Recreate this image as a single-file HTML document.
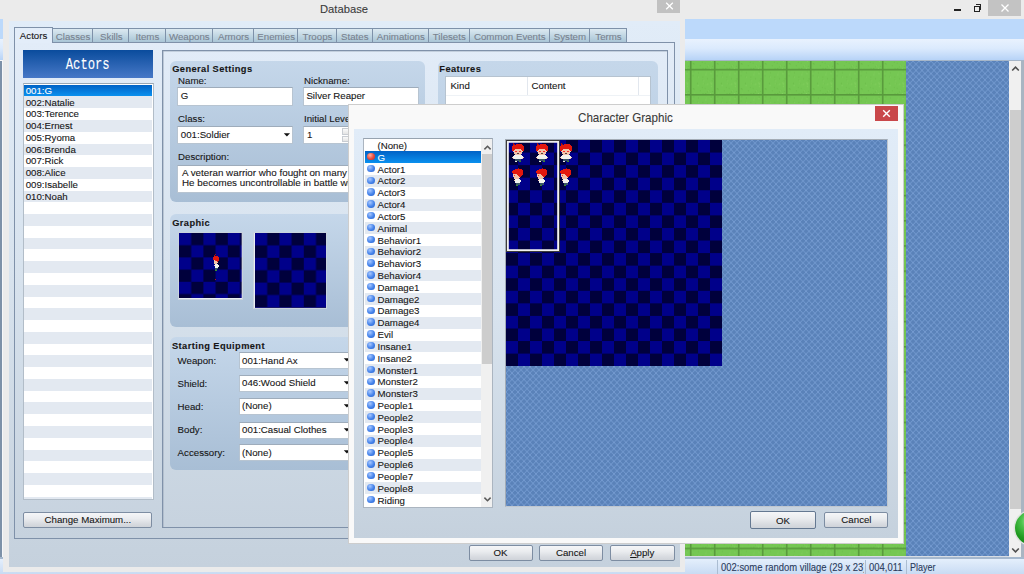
<!DOCTYPE html><html><head><meta charset="utf-8"><style>
*{margin:0;padding:0;box-sizing:border-box}
html,body{width:1024px;height:574px;overflow:hidden;background:#ebebeb;font-family:"Liberation Sans",sans-serif;font-size:9.7px;color:#161616;-webkit-text-stroke:0.1px currentColor}
.a{position:absolute}
.t{position:absolute;white-space:nowrap;line-height:12px;height:12px}
.grp{position:absolute;border-radius:6px;background:linear-gradient(#c5d7ea,#a8bed5)}
.inp{position:absolute;background:#fff;border:1px solid #b7c4d1;border-top-color:#9eacbb}
.btn{position:absolute;border:1px solid #7d8da2;border-radius:2px;background:linear-gradient(#f5f6f8 0%,#eaecef 40%,#d9dce1 75%,#cfd3d9 100%)}
.tab{position:absolute;top:28px;height:14px;border:1px solid #7e91a9;border-bottom:none;border-left:none;background:linear-gradient(#dce9f1,#bfd5e2 55%,#a9c5d6)}
.row{position:absolute;white-space:nowrap}
</style></head><body>
<div class="a" style="left:0;top:0;width:1024px;height:18.5px;background:#ebebeb"></div>
<div class="a" style="left:0;top:18.5px;width:1024px;height:20px;background:#bcd9fb"></div>
<div class="a" style="left:0;top:38.5px;width:1024px;height:21.5px;background:linear-gradient(#e9f2fe,#dbeafd 45%,#b7d3f7)"></div>
<div class="a" style="left:0;top:60px;width:1024px;height:1.3px;background:#a6b6c8"></div>
<div class="a" style="left:954px;top:9.2px;width:7px;height:1.6px;background:#222"></div>
<div class="a" style="left:973.5px;top:6px;width:6px;height:5.5px;border:1px solid #222;border-top-width:1.6px"></div>
<div class="a" style="left:975.5px;top:4px;width:5.5px;height:5.5px;border-top:1px solid #222;border-right:1px solid #222"></div>
<div class="a" style="left:987.5px;top:0;width:33.5px;height:15.6px;background:#c3c3c3"></div>
<svg class="a" style="left:999.5px;top:3px" width="10" height="10"><path d="M1.5 1.5L8.5 8.5M8.5 1.5L1.5 8.5" stroke="#fff" stroke-width="1.3"/></svg>
<div class="a" style="left:0;top:60px;width:3.3px;height:497px;background:#f6f7f9"></div>
<div class="a" style="left:0;top:61px;width:1.8px;height:495.8px;background:#7d91a8"></div>
<svg class="a" style="left:685px;top:61.3px" width="339" height="496"><defs><pattern id="gp" x="4.9" y="7.8" width="24" height="25.2" patternUnits="userSpaceOnUse"><rect width="24" height="25.2" fill="#75c753"/><rect x="7.0" y="14.2" width="1" height="1" fill="#67b845"/><rect x="21.2" y="12.7" width="1" height="1" fill="#7ccb57"/><rect x="3.4" y="2.3" width="1" height="1" fill="#6cbd49"/><rect x="7.4" y="7.3" width="1" height="1" fill="#6cbd49"/><rect x="13.4" y="14.4" width="1" height="1" fill="#6cbd49"/><rect x="15.4" y="5.4" width="1" height="1" fill="#86d161"/><rect x="20.2" y="13.8" width="1" height="1" fill="#82cf5c"/><rect x="16.1" y="3.4" width="1" height="1" fill="#7ccb57"/><rect x="2.9" y="19.6" width="1" height="1" fill="#67b845"/><rect x="11.9" y="18.2" width="1" height="1" fill="#6cbd49"/><rect x="17.0" y="22.7" width="1" height="1" fill="#6cbd49"/><rect x="17.3" y="15.0" width="1" height="1" fill="#86d161"/><rect x="20.5" y="4.2" width="1" height="1" fill="#86d161"/><rect x="12.4" y="7.8" width="1" height="1" fill="#6cbd49"/><rect x="18.4" y="21.2" width="1" height="1" fill="#6cbd49"/><rect x="12.7" y="10.7" width="1" height="1" fill="#67b845"/><rect x="13.2" y="11.2" width="1" height="1" fill="#86d161"/><rect x="21.0" y="17.3" width="1" height="1" fill="#82cf5c"/><rect x="20.0" y="24.3" width="1" height="1" fill="#86d161"/><rect x="16.7" y="9.3" width="1" height="1" fill="#7ccb57"/><rect x="21.0" y="14.8" width="1" height="1" fill="#86d161"/><rect x="15.3" y="24.2" width="1" height="1" fill="#67b845"/><rect x="8.0" y="3.4" width="1" height="1" fill="#6cbd49"/><rect x="3.9" y="20.0" width="1" height="1" fill="#6cbd49"/><rect x="20.8" y="2.5" width="1" height="1" fill="#6cbd49"/><rect x="18.1" y="21.6" width="1" height="1" fill="#82cf5c"/><rect x="14.7" y="19.1" width="1" height="1" fill="#6cbd49"/><rect x="17.1" y="9.4" width="1" height="1" fill="#67b845"/><rect x="12.6" y="24.5" width="1" height="1" fill="#67b845"/><rect x="2.2" y="4.4" width="1" height="1" fill="#7ccb57"/><rect x="2.7" y="6.4" width="1" height="1" fill="#6cbd49"/><rect x="8.1" y="7.9" width="1" height="1" fill="#82cf5c"/><rect x="22.6" y="9.6" width="1" height="1" fill="#67b845"/><rect x="22.1" y="22.2" width="1" height="1" fill="#6cbd49"/><rect x="9.9" y="21.6" width="1" height="1" fill="#6cbd49"/><rect x="15.5" y="15.4" width="1" height="1" fill="#7ccb57"/><rect x="4.2" y="23.9" width="1" height="1" fill="#7ccb57"/><rect x="7.7" y="16.3" width="1" height="1" fill="#86d161"/><rect x="21.7" y="11.8" width="1" height="1" fill="#67b845"/><rect x="12.9" y="14.3" width="1" height="1" fill="#82cf5c"/><rect x="0" y="0" width="24" height="1.6" fill="#58993c"/><rect x="0" y="0" width="1.6" height="25.2" fill="#58993c"/></pattern><pattern id="wp" x="0" y="0" width="6" height="6.3" patternUnits="userSpaceOnUse"><rect width="6" height="6.3" fill="#5a82b9"/><path d="M0 0L6 6.3M6 0L0 6.3" stroke="#7aa0d5" stroke-width="0.8"/></pattern></defs><rect x="0" y="0" width="221" height="496" fill="url(#gp)"/><rect x="221" y="0" width="103" height="496" fill="url(#wp)"/></svg>
<div class="a" style="left:685px;top:556.3px;width:324px;height:1px;background:#d8dde4"></div>
<div class="a" style="left:1009px;top:61.3px;width:12px;height:495.5px;background:#f0f0f0"></div>
<div class="a" style="left:1021px;top:61.3px;width:3px;height:495.5px;background:#a9b5c2"></div>
<div class="a" style="left:1010px;top:110px;width:11px;height:398.5px;background:#cdcdcd"></div>
<svg class="a" style="left:1010px;top:64px" width="11" height="9"><path d="M2.2 6.5L5.5 3.2L8.8 6.5" stroke="#505050" stroke-width="1.6" fill="none"/></svg>
<svg class="a" style="left:1010px;top:546px" width="11" height="9"><path d="M2.2 2.5L5.5 5.8L8.8 2.5" stroke="#505050" stroke-width="1.6" fill="none"/></svg>
<div class="a" style="left:1014.5px;top:511px;width:34px;height:34px;border-radius:50%;background:radial-gradient(circle at 45% 30%,#b6f0b0 0,#4cc24c 30%,#1f9a1f 60%,#107010);box-shadow:0 0 0 1.5px #dfe4df"></div>
<div class="a" style="left:0;top:557px;width:1024px;height:17px;background:linear-gradient(#a5b8ce 0,#a5b8ce 2px,#e4effc 2px,#d5e4f7 60%,#c8dbf3)"></div>
<div class="a" style="left:717.2px;top:559.5px;width:1.2px;height:14.5px;background:#abbdd2"></div>
<div class="a" style="left:865.0px;top:559.5px;width:1.2px;height:14.5px;background:#abbdd2"></div>
<div class="a" style="left:906.0px;top:559.5px;width:1.2px;height:14.5px;background:#abbdd2"></div>
<div class="a" style="left:718.4px;top:559px;width:145.8px;height:15px;overflow:hidden">
<div class="t" style="left:2.50px;top:2.33px;font-size:10.50px;color:#2a3b5c;transform:scaleX(0.9);transform-origin:0 0">002:some random village (29 x 23)</div>
</div>
<div class="t" style="left:869.00px;top:561.33px;font-size:10.50px;color:#2a3b5c;transform:scaleX(0.9);transform-origin:0 0">004,011</div>
<div class="t" style="left:910.00px;top:561.33px;font-size:10.50px;color:#2a3b5c;transform:scaleX(0.86);transform-origin:0 0">Player</div>
<div class="a" style="left:3.3px;top:0;width:681.8px;height:572.3px;background:#ebebeb"></div>
<div class="t" style="left:319.50px;top:3.40px;font-size:11.80px;color:#3a3a3a;transform:scaleX(0.95);transform-origin:0 0">Database</div>
<div class="a" style="left:657.3px;top:0;width:22.8px;height:12.8px;background:#c1c1c1"></div>
<svg class="a" style="left:665px;top:2.2px" width="9" height="8"><path d="M1.2 0.8L7.8 7.2M7.8 0.8L1.2 7.2" stroke="#fff" stroke-width="1.3"/></svg>
<div class="a" style="left:8.8px;top:20.5px;width:671px;height:546.2px;background:linear-gradient(#e1ecf8 0%,#d8e3ee 45%,#c5d1dd 100%)"></div>
<div class="a" style="left:14px;top:42px;width:661px;height:497px;border:1px solid #7f91a9;background:linear-gradient(#e2ecf8 0%,#d8e3ee 45%,#c6d2de 100%)"></div>
<div class="tab" style="left:53px;width:40px"></div>
<div class="t" style="left:52.70px;width:40.70px;text-align:center;top:30.89px;font-size:9.70px;color:#78828f">Classes</div>
<div class="tab" style="left:93px;width:36px"></div>
<div class="t" style="left:93.40px;width:36.00px;text-align:center;top:30.89px;font-size:9.70px;color:#78828f">Skills</div>
<div class="tab" style="left:129px;width:37px"></div>
<div class="t" style="left:129.40px;width:36.10px;text-align:center;top:30.89px;font-size:9.70px;color:#78828f">Items</div>
<div class="tab" style="left:166px;width:47px"></div>
<div class="t" style="left:165.50px;width:47.70px;text-align:center;top:30.89px;font-size:9.70px;color:#78828f">Weapons</div>
<div class="tab" style="left:213px;width:41px"></div>
<div class="t" style="left:213.20px;width:40.70px;text-align:center;top:30.89px;font-size:9.70px;color:#78828f">Armors</div>
<div class="tab" style="left:254px;width:44px"></div>
<div class="t" style="left:253.90px;width:44.50px;text-align:center;top:30.89px;font-size:9.70px;color:#78828f">Enemies</div>
<div class="tab" style="left:298px;width:39px"></div>
<div class="t" style="left:298.40px;width:38.20px;text-align:center;top:30.89px;font-size:9.70px;color:#78828f">Troops</div>
<div class="tab" style="left:337px;width:36px"></div>
<div class="t" style="left:336.60px;width:36.40px;text-align:center;top:30.89px;font-size:9.70px;color:#78828f">States</div>
<div class="tab" style="left:373px;width:56px"></div>
<div class="t" style="left:373.00px;width:55.60px;text-align:center;top:30.89px;font-size:9.70px;color:#78828f">Animations</div>
<div class="tab" style="left:429px;width:41px"></div>
<div class="t" style="left:428.60px;width:41.40px;text-align:center;top:30.89px;font-size:9.70px;color:#78828f">Tilesets</div>
<div class="tab" style="left:470px;width:80px"></div>
<div class="t" style="left:470.00px;width:79.50px;text-align:center;top:30.89px;font-size:9.70px;color:#78828f">Common Events</div>
<div class="tab" style="left:550px;width:40px"></div>
<div class="t" style="left:549.50px;width:40.90px;text-align:center;top:30.89px;font-size:9.70px;color:#78828f">System</div>
<div class="tab" style="left:590px;width:37px"></div>
<div class="t" style="left:590.40px;width:36.30px;text-align:center;top:30.89px;font-size:9.70px;color:#78828f">Terms</div>
<div class="a" style="left:14px;top:27px;width:39px;height:16px;border:1px solid #7f91a9;border-bottom:none;background:#e3edf9"></div>
<div class="t" style="left:14.50px;width:38.20px;text-align:center;top:30.29px;font-size:9.70px;">Actors</div>
<div class="a" style="left:22.5px;top:49.7px;width:130.6px;height:28.3px;background:linear-gradient(#0a4c9d,#4778c7)"></div>
<div class="a" style="left:22.5px;top:55.5px;width:131px;height:18px;text-align:center;color:#fff;font-family:'Liberation Mono',monospace;font-size:16.5px;line-height:18px"><span style="display:inline-block;transform:scaleX(0.74)">Actors</span></div>
<div class="a" style="left:22.5px;top:82.6px;width:131px;height:417px;border:1px solid #b2bdc8;border-top-color:#9aa7b4;background:#fff;overflow:hidden">
<div class="row" style="left:0.6px;top:1.10px;width:128.4px;height:11.77px;background:linear-gradient(#0062c6,#0a90ee)"></div>
<div class="t" style="left:2.20px;top:1.19px;font-size:9.70px;color:#fff">001:G</div>
<div class="row" style="left:0.6px;top:12.87px;width:128.4px;height:11.77px;background:#e3e9f1"></div>
<div class="t" style="left:2.20px;top:12.96px;font-size:9.70px;">002:Natalie</div>
<div class="row" style="left:0.6px;top:24.64px;width:128.4px;height:11.77px;background:#fff"></div>
<div class="t" style="left:2.20px;top:24.73px;font-size:9.70px;">003:Terence</div>
<div class="row" style="left:0.6px;top:36.41px;width:128.4px;height:11.77px;background:#e3e9f1"></div>
<div class="t" style="left:2.20px;top:36.50px;font-size:9.70px;">004:Ernest</div>
<div class="row" style="left:0.6px;top:48.18px;width:128.4px;height:11.77px;background:#fff"></div>
<div class="t" style="left:2.20px;top:48.27px;font-size:9.70px;">005:Ryoma</div>
<div class="row" style="left:0.6px;top:59.95px;width:128.4px;height:11.77px;background:#e3e9f1"></div>
<div class="t" style="left:2.20px;top:60.04px;font-size:9.70px;">006:Brenda</div>
<div class="row" style="left:0.6px;top:71.72px;width:128.4px;height:11.77px;background:#fff"></div>
<div class="t" style="left:2.20px;top:71.81px;font-size:9.70px;">007:Rick</div>
<div class="row" style="left:0.6px;top:83.49px;width:128.4px;height:11.77px;background:#e3e9f1"></div>
<div class="t" style="left:2.20px;top:83.58px;font-size:9.70px;">008:Alice</div>
<div class="row" style="left:0.6px;top:95.26px;width:128.4px;height:11.77px;background:#fff"></div>
<div class="t" style="left:2.20px;top:95.35px;font-size:9.70px;">009:Isabelle</div>
<div class="row" style="left:0.6px;top:107.03px;width:128.4px;height:11.77px;background:#e3e9f1"></div>
<div class="t" style="left:2.20px;top:107.12px;font-size:9.70px;">010:Noah</div>
<div class="row" style="left:0.6px;top:118.80px;width:128.4px;height:11.77px;background:#fff"></div>
<div class="row" style="left:0.6px;top:130.57px;width:128.4px;height:11.77px;background:#e3e9f1"></div>
<div class="row" style="left:0.6px;top:142.34px;width:128.4px;height:11.77px;background:#fff"></div>
<div class="row" style="left:0.6px;top:154.11px;width:128.4px;height:11.77px;background:#e3e9f1"></div>
<div class="row" style="left:0.6px;top:165.88px;width:128.4px;height:11.77px;background:#fff"></div>
<div class="row" style="left:0.6px;top:177.65px;width:128.4px;height:11.77px;background:#e3e9f1"></div>
<div class="row" style="left:0.6px;top:189.42px;width:128.4px;height:11.77px;background:#fff"></div>
<div class="row" style="left:0.6px;top:201.19px;width:128.4px;height:11.77px;background:#e3e9f1"></div>
<div class="row" style="left:0.6px;top:212.96px;width:128.4px;height:11.77px;background:#fff"></div>
<div class="row" style="left:0.6px;top:224.73px;width:128.4px;height:11.77px;background:#e3e9f1"></div>
<div class="row" style="left:0.6px;top:236.50px;width:128.4px;height:11.77px;background:#fff"></div>
<div class="row" style="left:0.6px;top:248.27px;width:128.4px;height:11.77px;background:#e3e9f1"></div>
<div class="row" style="left:0.6px;top:260.04px;width:128.4px;height:11.77px;background:#fff"></div>
<div class="row" style="left:0.6px;top:271.81px;width:128.4px;height:11.77px;background:#e3e9f1"></div>
<div class="row" style="left:0.6px;top:283.58px;width:128.4px;height:11.77px;background:#fff"></div>
<div class="row" style="left:0.6px;top:295.35px;width:128.4px;height:11.77px;background:#e3e9f1"></div>
<div class="row" style="left:0.6px;top:307.12px;width:128.4px;height:11.77px;background:#fff"></div>
<div class="row" style="left:0.6px;top:318.89px;width:128.4px;height:11.77px;background:#e3e9f1"></div>
<div class="row" style="left:0.6px;top:330.66px;width:128.4px;height:11.77px;background:#fff"></div>
<div class="row" style="left:0.6px;top:342.43px;width:128.4px;height:11.77px;background:#e3e9f1"></div>
<div class="row" style="left:0.6px;top:354.20px;width:128.4px;height:11.77px;background:#fff"></div>
<div class="row" style="left:0.6px;top:365.97px;width:128.4px;height:11.77px;background:#e3e9f1"></div>
<div class="row" style="left:0.6px;top:377.74px;width:128.4px;height:11.77px;background:#fff"></div>
<div class="row" style="left:0.6px;top:389.51px;width:128.4px;height:11.77px;background:#e3e9f1"></div>
<div class="row" style="left:0.6px;top:401.28px;width:128.4px;height:11.77px;background:#fff"></div>
<div class="row" style="left:0.6px;top:413.05px;width:128.4px;height:11.77px;background:#e3e9f1"></div>
</div>
<div class="btn" style="left:23.4px;top:511.6px;width:129px;height:16px"></div>
<div class="t" style="left:23.40px;width:129.00px;text-align:center;top:514.19px;font-size:9.70px;">Change Maximum...</div>
<div class="a" style="left:162px;top:50px;width:506px;height:478px;border:1px solid #7f91a9;box-shadow:inset 0.6px 0.6px 0 #a4b1c1"></div>
<div class="grp" style="left:170.2px;top:61px;width:254.5px;height:141px"></div>
<div class="t" style="left:172.20px;top:63.43px;font-size:9.30px;font-weight:bold;letter-spacing:0.4px">General Settings</div>
<div class="t" style="left:178.00px;top:74.79px;font-size:9.70px;">Name:</div>
<div class="t" style="left:304.00px;top:74.79px;font-size:9.70px;">Nickname:</div>
<div class="inp" style="left:177px;top:87px;width:116px;height:19px"></div>
<div class="t" style="left:180.80px;top:89.99px;font-size:9.70px;">G</div>
<div class="inp" style="left:303px;top:87px;width:116px;height:19px"></div>
<div class="t" style="left:306.40px;top:89.99px;font-size:9.70px;">Silver Reaper</div>
<div class="t" style="left:178.00px;top:112.79px;font-size:9.70px;">Class:</div>
<div class="t" style="left:304.00px;top:112.79px;font-size:9.70px;">Initial Level:</div>
<div class="inp" style="left:177px;top:126px;width:116px;height:18px"></div>
<div class="t" style="left:180.80px;top:128.59px;font-size:9.70px;">001:Soldier</div>
<svg class="a" style="left:282.5px;top:131.5px" width="8" height="6"><path d="M0.8 1.2h6.2l-3.1 3.4z" fill="#111"/></svg>
<div class="inp" style="left:303px;top:126px;width:60px;height:18px"></div>
<div class="t" style="left:307.00px;top:128.59px;font-size:9.70px;">1</div>
<div class="a" style="left:342.4px;top:128px;width:8px;height:6.5px;background:linear-gradient(#fafafa,#e4e4e4);border:1px solid #c8ccd2"></div>
<div class="a" style="left:342.4px;top:135.5px;width:8px;height:6.5px;background:linear-gradient(#fafafa,#e4e4e4);border:1px solid #c8ccd2"></div>
<div class="t" style="left:178.00px;top:151.29px;font-size:9.70px;">Description:</div>
<div class="inp" style="left:177px;top:165px;width:240px;height:28px"></div>
<div class="t" style="left:182.00px;top:166.86px;font-size:9.80px;">A veteran warrior who fought on many battlefields.</div>
<div class="t" style="left:182.00px;top:177.06px;font-size:9.80px;">He becomes uncontrollable in battle when angered.</div>
<div class="grp" style="left:437.7px;top:60.6px;width:220.3px;height:300px"></div>
<div class="t" style="left:439.30px;top:63.43px;font-size:9.30px;font-weight:bold;letter-spacing:0.4px">Features</div>
<div class="a" style="left:445.3px;top:75.8px;width:205.7px;height:200px;background:#fff;border:1px solid #b6c3d0"></div>
<div class="a" style="left:446.3px;top:94.5px;width:204px;height:1px;background:#eef2f6"></div>
<div class="a" style="left:526.5px;top:77px;width:1px;height:17.5px;background:#e2e7ee"></div>
<div class="a" style="left:637.7px;top:77px;width:1px;height:17.5px;background:#e2e7ee"></div>
<div class="t" style="left:450.40px;top:80.09px;font-size:9.70px;">Kind</div>
<div class="t" style="left:531.60px;top:80.09px;font-size:9.70px;">Content</div>
<div class="grp" style="left:169.8px;top:214.4px;width:255px;height:112.7px"></div>
<div class="t" style="left:172.20px;top:217.13px;font-size:9.30px;font-weight:bold;letter-spacing:0.4px">Graphic</div>
<div class="a" style="left:177.8px;top:231.5px;width:65.2px;height:68.3px;border:1px solid #c9d3dd;background:#e9eef3"></div>
<svg class="a" style="left:179.00px;top:232.70px" width="62.70" height="65.60"><defs><pattern id="ck1" width="24.40" height="24.40" patternUnits="userSpaceOnUse"><rect width="24.40" height="24.40" fill="#00003c"/><rect width="12.20" height="12.20" fill="#00008a"/><rect x="12.20" y="12.20" width="12.20" height="12.20" fill="#00008a"/></pattern></defs><rect width="62.70" height="65.60" fill="url(#ck1)"/></svg>
<div class="a" style="left:253.4px;top:231.5px;width:73.9px;height:77.3px;border:1px solid #c9d3dd;background:#e9eef3"></div>
<svg class="a" style="left:254.60px;top:232.70px" width="71.50" height="74.90"><defs><pattern id="ck2" width="24.40" height="24.80" patternUnits="userSpaceOnUse"><rect width="24.40" height="24.80" fill="#00003c"/><rect width="12.20" height="12.40" fill="#00008a"/><rect x="12.20" y="12.40" width="12.20" height="12.40" fill="#00008a"/></pattern></defs><rect width="71.50" height="74.90" fill="url(#ck2)"/></svg>
<div class="grp" style="left:169.8px;top:336.8px;width:255px;height:133.1px"></div>
<div class="t" style="left:172.00px;top:339.83px;font-size:9.30px;font-weight:bold;letter-spacing:0.4px">Starting Equipment</div>
<div class="t" style="left:177.60px;top:354.89px;font-size:9.70px;">Weapon:</div>
<div class="inp" style="left:239px;top:352px;width:115px;height:17px"></div>
<div class="t" style="left:242.00px;top:354.59px;font-size:9.70px;">001:Hand Ax</div>
<svg class="a" style="left:343px;top:357.4px" width="8" height="6"><path d="M0.8 1.2h6.2l-3.1 3.4z" fill="#111"/></svg>
<div class="t" style="left:177.60px;top:377.59px;font-size:9.70px;">Shield:</div>
<div class="inp" style="left:239px;top:375px;width:115px;height:17px"></div>
<div class="t" style="left:242.00px;top:377.29px;font-size:9.70px;">046:Wood Shield</div>
<svg class="a" style="left:343px;top:380.1px" width="8" height="6"><path d="M0.8 1.2h6.2l-3.1 3.4z" fill="#111"/></svg>
<div class="t" style="left:177.60px;top:400.79px;font-size:9.70px;">Head:</div>
<div class="inp" style="left:239px;top:398px;width:115px;height:17px"></div>
<div class="t" style="left:242.00px;top:400.49px;font-size:9.70px;">(None)</div>
<svg class="a" style="left:343px;top:403.3px" width="8" height="6"><path d="M0.8 1.2h6.2l-3.1 3.4z" fill="#111"/></svg>
<div class="t" style="left:177.60px;top:424.09px;font-size:9.70px;">Body:</div>
<div class="inp" style="left:239px;top:422px;width:115px;height:17px"></div>
<div class="t" style="left:242.00px;top:423.79px;font-size:9.70px;">001:Casual Clothes</div>
<svg class="a" style="left:343px;top:426.5px" width="8" height="6"><path d="M0.8 1.2h6.2l-3.1 3.4z" fill="#111"/></svg>
<div class="t" style="left:177.60px;top:447.09px;font-size:9.70px;">Accessory:</div>
<div class="inp" style="left:239px;top:444px;width:115px;height:17px"></div>
<div class="t" style="left:242.00px;top:446.79px;font-size:9.70px;">(None)</div>
<svg class="a" style="left:343px;top:449.1px" width="8" height="6"><path d="M0.8 1.2h6.2l-3.1 3.4z" fill="#111"/></svg>
<div class="btn" style="left:468.5px;top:544.6px;width:64.0px;height:16.2px"></div>
<div class="t" style="left:468.50px;width:64.00px;text-align:center;top:547.29px;font-size:9.70px;">OK</div>
<div class="btn" style="left:539.0px;top:544.6px;width:64.0px;height:16.2px"></div>
<div class="t" style="left:539.00px;width:64.00px;text-align:center;top:547.29px;font-size:9.70px;">Cancel</div>
<div class="btn" style="left:610.0px;top:544.6px;width:64.5px;height:16.2px"></div>
<div class="t" style="left:610.00px;width:64.50px;text-align:center;top:547.29px;font-size:9.70px;"><u>A</u>pply</div>
<div class="a" style="left:348.5px;top:105px;width:554.5px;height:438.4px;background:#f9f9f9;box-shadow:0 0 0 1px #cdcdcd"></div>
<div class="t" style="left:577.80px;top:111.54px;font-size:12.90px;color:#3a3a3a;transform:scaleX(0.9);transform-origin:0 0">Character Graphic</div>
<div class="a" style="left:875px;top:105.5px;width:23px;height:15.6px;background:#c9474a"></div>
<svg class="a" style="left:882px;top:109px" width="9" height="9"><path d="M1.2 1.2L7.8 7.8M7.8 1.2L1.2 7.8" stroke="#fff" stroke-width="1.4"/></svg>
<div class="a" style="left:353.5px;top:128.5px;width:544.3px;height:409.5px;background:linear-gradient(#e1ecf8 0%,#d8e3ee 45%,#c5d1dd 100%)"></div>
<div class="a" style="left:363.4px;top:138.4px;width:130px;height:369.6px;border:1px solid #abb5c0;border-top-color:#97a3b0;background:#fff;overflow:hidden">
<div class="row" style="left:0.6px;top:0.20px;width:115.6px;height:11.82px;background:#fff"></div>
<div class="t" style="left:13.10px;top:0.59px;font-size:9.70px;">(None)</div>
<div class="row" style="left:0.6px;top:12.02px;width:115.6px;height:11.82px;background:linear-gradient(#0062c6,#0a90ee)"></div>
<div class="t" style="left:13.10px;top:12.41px;font-size:9.70px;color:#fff">G</div>
<div class="a" style="left:2.9px;top:13.62px;width:7.3px;height:7.3px;border-radius:50%;background:radial-gradient(circle at 38% 32%,#ffb0a0,#e64a3c 55%,#c42c22)"></div>
<div class="row" style="left:0.6px;top:23.84px;width:115.6px;height:11.82px;background:#fff"></div>
<div class="t" style="left:13.10px;top:24.23px;font-size:9.70px;">Actor1</div>
<div class="a" style="left:2.9px;top:25.44px;width:7.3px;height:7.3px;border-radius:50%;background:radial-gradient(circle at 38% 32%,#a8c8ff,#4482ea 55%,#2c64cc)"></div>
<div class="row" style="left:0.6px;top:35.66px;width:115.6px;height:11.82px;background:#e3e9f1"></div>
<div class="t" style="left:13.10px;top:36.05px;font-size:9.70px;">Actor2</div>
<div class="a" style="left:2.9px;top:37.26px;width:7.3px;height:7.3px;border-radius:50%;background:radial-gradient(circle at 38% 32%,#a8c8ff,#4482ea 55%,#2c64cc)"></div>
<div class="row" style="left:0.6px;top:47.48px;width:115.6px;height:11.82px;background:#fff"></div>
<div class="t" style="left:13.10px;top:47.87px;font-size:9.70px;">Actor3</div>
<div class="a" style="left:2.9px;top:49.08px;width:7.3px;height:7.3px;border-radius:50%;background:radial-gradient(circle at 38% 32%,#a8c8ff,#4482ea 55%,#2c64cc)"></div>
<div class="row" style="left:0.6px;top:59.30px;width:115.6px;height:11.82px;background:#e3e9f1"></div>
<div class="t" style="left:13.10px;top:59.69px;font-size:9.70px;">Actor4</div>
<div class="a" style="left:2.9px;top:60.90px;width:7.3px;height:7.3px;border-radius:50%;background:radial-gradient(circle at 38% 32%,#a8c8ff,#4482ea 55%,#2c64cc)"></div>
<div class="row" style="left:0.6px;top:71.12px;width:115.6px;height:11.82px;background:#fff"></div>
<div class="t" style="left:13.10px;top:71.51px;font-size:9.70px;">Actor5</div>
<div class="a" style="left:2.9px;top:72.72px;width:7.3px;height:7.3px;border-radius:50%;background:radial-gradient(circle at 38% 32%,#a8c8ff,#4482ea 55%,#2c64cc)"></div>
<div class="row" style="left:0.6px;top:82.94px;width:115.6px;height:11.82px;background:#e3e9f1"></div>
<div class="t" style="left:13.10px;top:83.33px;font-size:9.70px;">Animal</div>
<div class="a" style="left:2.9px;top:84.54px;width:7.3px;height:7.3px;border-radius:50%;background:radial-gradient(circle at 38% 32%,#a8c8ff,#4482ea 55%,#2c64cc)"></div>
<div class="row" style="left:0.6px;top:94.76px;width:115.6px;height:11.82px;background:#fff"></div>
<div class="t" style="left:13.10px;top:95.15px;font-size:9.70px;">Behavior1</div>
<div class="a" style="left:2.9px;top:96.36px;width:7.3px;height:7.3px;border-radius:50%;background:radial-gradient(circle at 38% 32%,#a8c8ff,#4482ea 55%,#2c64cc)"></div>
<div class="row" style="left:0.6px;top:106.58px;width:115.6px;height:11.82px;background:#e3e9f1"></div>
<div class="t" style="left:13.10px;top:106.97px;font-size:9.70px;">Behavior2</div>
<div class="a" style="left:2.9px;top:108.18px;width:7.3px;height:7.3px;border-radius:50%;background:radial-gradient(circle at 38% 32%,#a8c8ff,#4482ea 55%,#2c64cc)"></div>
<div class="row" style="left:0.6px;top:118.40px;width:115.6px;height:11.82px;background:#fff"></div>
<div class="t" style="left:13.10px;top:118.79px;font-size:9.70px;">Behavior3</div>
<div class="a" style="left:2.9px;top:120.00px;width:7.3px;height:7.3px;border-radius:50%;background:radial-gradient(circle at 38% 32%,#a8c8ff,#4482ea 55%,#2c64cc)"></div>
<div class="row" style="left:0.6px;top:130.22px;width:115.6px;height:11.82px;background:#e3e9f1"></div>
<div class="t" style="left:13.10px;top:130.61px;font-size:9.70px;">Behavior4</div>
<div class="a" style="left:2.9px;top:131.82px;width:7.3px;height:7.3px;border-radius:50%;background:radial-gradient(circle at 38% 32%,#a8c8ff,#4482ea 55%,#2c64cc)"></div>
<div class="row" style="left:0.6px;top:142.04px;width:115.6px;height:11.82px;background:#fff"></div>
<div class="t" style="left:13.10px;top:142.43px;font-size:9.70px;">Damage1</div>
<div class="a" style="left:2.9px;top:143.64px;width:7.3px;height:7.3px;border-radius:50%;background:radial-gradient(circle at 38% 32%,#a8c8ff,#4482ea 55%,#2c64cc)"></div>
<div class="row" style="left:0.6px;top:153.86px;width:115.6px;height:11.82px;background:#e3e9f1"></div>
<div class="t" style="left:13.10px;top:154.25px;font-size:9.70px;">Damage2</div>
<div class="a" style="left:2.9px;top:155.46px;width:7.3px;height:7.3px;border-radius:50%;background:radial-gradient(circle at 38% 32%,#a8c8ff,#4482ea 55%,#2c64cc)"></div>
<div class="row" style="left:0.6px;top:165.68px;width:115.6px;height:11.82px;background:#fff"></div>
<div class="t" style="left:13.10px;top:166.07px;font-size:9.70px;">Damage3</div>
<div class="a" style="left:2.9px;top:167.28px;width:7.3px;height:7.3px;border-radius:50%;background:radial-gradient(circle at 38% 32%,#a8c8ff,#4482ea 55%,#2c64cc)"></div>
<div class="row" style="left:0.6px;top:177.50px;width:115.6px;height:11.82px;background:#e3e9f1"></div>
<div class="t" style="left:13.10px;top:177.89px;font-size:9.70px;">Damage4</div>
<div class="a" style="left:2.9px;top:179.10px;width:7.3px;height:7.3px;border-radius:50%;background:radial-gradient(circle at 38% 32%,#a8c8ff,#4482ea 55%,#2c64cc)"></div>
<div class="row" style="left:0.6px;top:189.32px;width:115.6px;height:11.82px;background:#fff"></div>
<div class="t" style="left:13.10px;top:189.71px;font-size:9.70px;">Evil</div>
<div class="a" style="left:2.9px;top:190.92px;width:7.3px;height:7.3px;border-radius:50%;background:radial-gradient(circle at 38% 32%,#a8c8ff,#4482ea 55%,#2c64cc)"></div>
<div class="row" style="left:0.6px;top:201.14px;width:115.6px;height:11.82px;background:#e3e9f1"></div>
<div class="t" style="left:13.10px;top:201.53px;font-size:9.70px;">Insane1</div>
<div class="a" style="left:2.9px;top:202.74px;width:7.3px;height:7.3px;border-radius:50%;background:radial-gradient(circle at 38% 32%,#a8c8ff,#4482ea 55%,#2c64cc)"></div>
<div class="row" style="left:0.6px;top:212.96px;width:115.6px;height:11.82px;background:#fff"></div>
<div class="t" style="left:13.10px;top:213.35px;font-size:9.70px;">Insane2</div>
<div class="a" style="left:2.9px;top:214.56px;width:7.3px;height:7.3px;border-radius:50%;background:radial-gradient(circle at 38% 32%,#a8c8ff,#4482ea 55%,#2c64cc)"></div>
<div class="row" style="left:0.6px;top:224.78px;width:115.6px;height:11.82px;background:#e3e9f1"></div>
<div class="t" style="left:13.10px;top:225.17px;font-size:9.70px;">Monster1</div>
<div class="a" style="left:2.9px;top:226.38px;width:7.3px;height:7.3px;border-radius:50%;background:radial-gradient(circle at 38% 32%,#a8c8ff,#4482ea 55%,#2c64cc)"></div>
<div class="row" style="left:0.6px;top:236.60px;width:115.6px;height:11.82px;background:#fff"></div>
<div class="t" style="left:13.10px;top:236.99px;font-size:9.70px;">Monster2</div>
<div class="a" style="left:2.9px;top:238.20px;width:7.3px;height:7.3px;border-radius:50%;background:radial-gradient(circle at 38% 32%,#a8c8ff,#4482ea 55%,#2c64cc)"></div>
<div class="row" style="left:0.6px;top:248.42px;width:115.6px;height:11.82px;background:#e3e9f1"></div>
<div class="t" style="left:13.10px;top:248.81px;font-size:9.70px;">Monster3</div>
<div class="a" style="left:2.9px;top:250.02px;width:7.3px;height:7.3px;border-radius:50%;background:radial-gradient(circle at 38% 32%,#a8c8ff,#4482ea 55%,#2c64cc)"></div>
<div class="row" style="left:0.6px;top:260.24px;width:115.6px;height:11.82px;background:#fff"></div>
<div class="t" style="left:13.10px;top:260.63px;font-size:9.70px;">People1</div>
<div class="a" style="left:2.9px;top:261.84px;width:7.3px;height:7.3px;border-radius:50%;background:radial-gradient(circle at 38% 32%,#a8c8ff,#4482ea 55%,#2c64cc)"></div>
<div class="row" style="left:0.6px;top:272.06px;width:115.6px;height:11.82px;background:#e3e9f1"></div>
<div class="t" style="left:13.10px;top:272.45px;font-size:9.70px;">People2</div>
<div class="a" style="left:2.9px;top:273.66px;width:7.3px;height:7.3px;border-radius:50%;background:radial-gradient(circle at 38% 32%,#a8c8ff,#4482ea 55%,#2c64cc)"></div>
<div class="row" style="left:0.6px;top:283.88px;width:115.6px;height:11.82px;background:#fff"></div>
<div class="t" style="left:13.10px;top:284.27px;font-size:9.70px;">People3</div>
<div class="a" style="left:2.9px;top:285.48px;width:7.3px;height:7.3px;border-radius:50%;background:radial-gradient(circle at 38% 32%,#a8c8ff,#4482ea 55%,#2c64cc)"></div>
<div class="row" style="left:0.6px;top:295.70px;width:115.6px;height:11.82px;background:#e3e9f1"></div>
<div class="t" style="left:13.10px;top:296.09px;font-size:9.70px;">People4</div>
<div class="a" style="left:2.9px;top:297.30px;width:7.3px;height:7.3px;border-radius:50%;background:radial-gradient(circle at 38% 32%,#a8c8ff,#4482ea 55%,#2c64cc)"></div>
<div class="row" style="left:0.6px;top:307.52px;width:115.6px;height:11.82px;background:#fff"></div>
<div class="t" style="left:13.10px;top:307.91px;font-size:9.70px;">People5</div>
<div class="a" style="left:2.9px;top:309.12px;width:7.3px;height:7.3px;border-radius:50%;background:radial-gradient(circle at 38% 32%,#a8c8ff,#4482ea 55%,#2c64cc)"></div>
<div class="row" style="left:0.6px;top:319.34px;width:115.6px;height:11.82px;background:#e3e9f1"></div>
<div class="t" style="left:13.10px;top:319.73px;font-size:9.70px;">People6</div>
<div class="a" style="left:2.9px;top:320.94px;width:7.3px;height:7.3px;border-radius:50%;background:radial-gradient(circle at 38% 32%,#a8c8ff,#4482ea 55%,#2c64cc)"></div>
<div class="row" style="left:0.6px;top:331.16px;width:115.6px;height:11.82px;background:#fff"></div>
<div class="t" style="left:13.10px;top:331.55px;font-size:9.70px;">People7</div>
<div class="a" style="left:2.9px;top:332.76px;width:7.3px;height:7.3px;border-radius:50%;background:radial-gradient(circle at 38% 32%,#a8c8ff,#4482ea 55%,#2c64cc)"></div>
<div class="row" style="left:0.6px;top:342.98px;width:115.6px;height:11.82px;background:#e3e9f1"></div>
<div class="t" style="left:13.10px;top:343.37px;font-size:9.70px;">People8</div>
<div class="a" style="left:2.9px;top:344.58px;width:7.3px;height:7.3px;border-radius:50%;background:radial-gradient(circle at 38% 32%,#a8c8ff,#4482ea 55%,#2c64cc)"></div>
<div class="row" style="left:0.6px;top:354.80px;width:115.6px;height:11.82px;background:#fff"></div>
<div class="t" style="left:13.10px;top:355.19px;font-size:9.70px;">Riding</div>
<div class="a" style="left:2.9px;top:356.40px;width:7.3px;height:7.3px;border-radius:50%;background:radial-gradient(circle at 38% 32%,#a8c8ff,#4482ea 55%,#2c64cc)"></div>
<div class="a" style="left:116.6px;top:0;width:11.8px;height:368px;background:#f0f0f0"></div>
<div class="a" style="left:117.2px;top:14.5px;width:11px;height:210px;background:#cdcdcd"></div>
<svg class="a" style="left:117.4px;top:3.5px" width="11" height="9"><path d="M2.4 6.4L5.5 3.3L8.6 6.4" stroke="#5a5a5a" stroke-width="1.5" fill="none"/></svg>
<svg class="a" style="left:117.4px;top:355.5px" width="11" height="9"><path d="M2.4 2.6L5.5 5.7L8.6 2.6" stroke="#5a5a5a" stroke-width="1.5" fill="none"/></svg>
</div>
<div class="a" style="left:505px;top:138.6px;width:383.4px;height:368.8px;border:1.2px solid #c0c7cf;border-top-color:#a3acb6;border-left-color:#a3acb6;overflow:hidden">
<svg class="a" style="left:0;top:0" width="382" height="367"><defs><pattern id="wp2" x="0" y="0" width="6" height="6.3" patternUnits="userSpaceOnUse"><rect width="6" height="6.3" fill="#5a82b9"/><path d="M0 0L6 6.3M6 0L0 6.3" stroke="#7aa0d5" stroke-width="0.8"/></pattern></defs><rect width="382" height="367" fill="url(#wp2)"/></svg>
</div>
<svg class="a" style="left:506.00px;top:140.00px" width="216.00" height="226.20"><defs><pattern id="ck3" width="24.00" height="25.13" patternUnits="userSpaceOnUse"><rect width="24.00" height="25.13" fill="#00003c"/><rect width="12.00" height="12.57" fill="#00008a"/><rect x="12.00" y="12.57" width="12.00" height="12.57" fill="#00008a"/></pattern></defs><rect width="216.00" height="226.20" fill="url(#ck3)"/></svg>
<svg class="a" style="left:511.50px;top:142.50px" width="12.00" height="19.00" viewBox="0 0 12 19" shape-rendering="crispEdges"><rect x="1" y="0" width="1" height="1" fill="#a81010"/><rect x="1" y="1" width="2" height="1" fill="#a81010"/><rect x="4" y="1" width="6" height="1" fill="#e2180e"/><rect x="1" y="2" width="10" height="1" fill="#e2180e"/><rect x="0" y="3" width="12" height="1" fill="#e2180e"/><rect x="0" y="4" width="12" height="1" fill="#e2180e"/><rect x="0" y="5" width="12" height="1" fill="#e2180e"/><rect x="0" y="6" width="3" height="1" fill="#e2180e"/><rect x="3" y="6" width="6" height="1" fill="#f2c4aa"/><rect x="9" y="6" width="3" height="1" fill="#e2180e"/><rect x="0" y="7" width="2" height="1" fill="#e2180e"/><rect x="2" y="7" width="8" height="1" fill="#f2c4aa"/><rect x="10" y="7" width="2" height="1" fill="#e2180e"/><rect x="1" y="8" width="2" height="1" fill="#f2c4aa"/><rect x="3" y="8" width="2" height="1" fill="#ff2a2a"/><rect x="5" y="8" width="2" height="1" fill="#f2c4aa"/><rect x="7" y="8" width="2" height="1" fill="#ff2a2a"/><rect x="9" y="8" width="2" height="1" fill="#f2c4aa"/><rect x="2" y="9" width="8" height="1" fill="#f2c4aa"/><rect x="2" y="10" width="3" height="1" fill="#f2c4aa"/><rect x="5" y="10" width="2" height="1" fill="#5a4040"/><rect x="7" y="10" width="3" height="1" fill="#f2c4aa"/><rect x="3" y="11" width="6" height="1" fill="#f2c4aa"/><rect x="2" y="12" width="8" height="1" fill="#f3f3ee"/><rect x="1" y="13" width="10" height="1" fill="#f3f3ee"/><rect x="0" y="14" width="1" height="1" fill="#f2c4aa"/><rect x="1" y="14" width="10" height="1" fill="#f3f3ee"/><rect x="11" y="14" width="1" height="1" fill="#f2c4aa"/><rect x="1" y="15" width="1" height="1" fill="#f2c4aa"/><rect x="2" y="15" width="8" height="1" fill="#f3f3ee"/><rect x="10" y="15" width="1" height="1" fill="#f2c4aa"/><rect x="3" y="16" width="6" height="1" fill="#3b5866"/><rect x="3" y="17" width="6" height="1" fill="#3b5866"/><rect x="3" y="18" width="2" height="1" fill="#e8e8e8"/><rect x="7" y="18" width="2" height="1" fill="#3c8c2c"/></svg>
<svg class="a" style="left:535.50px;top:142.50px" width="12.00" height="19.00" viewBox="0 0 12 19" shape-rendering="crispEdges"><rect x="1" y="0" width="1" height="1" fill="#a81010"/><rect x="1" y="1" width="2" height="1" fill="#a81010"/><rect x="4" y="1" width="6" height="1" fill="#e2180e"/><rect x="1" y="2" width="10" height="1" fill="#e2180e"/><rect x="0" y="3" width="12" height="1" fill="#e2180e"/><rect x="0" y="4" width="12" height="1" fill="#e2180e"/><rect x="0" y="5" width="12" height="1" fill="#e2180e"/><rect x="0" y="6" width="3" height="1" fill="#e2180e"/><rect x="3" y="6" width="6" height="1" fill="#f2c4aa"/><rect x="9" y="6" width="3" height="1" fill="#e2180e"/><rect x="0" y="7" width="2" height="1" fill="#e2180e"/><rect x="2" y="7" width="8" height="1" fill="#f2c4aa"/><rect x="10" y="7" width="2" height="1" fill="#e2180e"/><rect x="1" y="8" width="2" height="1" fill="#f2c4aa"/><rect x="3" y="8" width="2" height="1" fill="#ff2a2a"/><rect x="5" y="8" width="2" height="1" fill="#f2c4aa"/><rect x="7" y="8" width="2" height="1" fill="#ff2a2a"/><rect x="9" y="8" width="2" height="1" fill="#f2c4aa"/><rect x="2" y="9" width="8" height="1" fill="#f2c4aa"/><rect x="2" y="10" width="3" height="1" fill="#f2c4aa"/><rect x="5" y="10" width="2" height="1" fill="#5a4040"/><rect x="7" y="10" width="3" height="1" fill="#f2c4aa"/><rect x="3" y="11" width="6" height="1" fill="#f2c4aa"/><rect x="2" y="12" width="8" height="1" fill="#f3f3ee"/><rect x="1" y="13" width="10" height="1" fill="#f3f3ee"/><rect x="0" y="14" width="1" height="1" fill="#f2c4aa"/><rect x="1" y="14" width="10" height="1" fill="#f3f3ee"/><rect x="11" y="14" width="1" height="1" fill="#f2c4aa"/><rect x="1" y="15" width="1" height="1" fill="#f2c4aa"/><rect x="2" y="15" width="8" height="1" fill="#f3f3ee"/><rect x="10" y="15" width="1" height="1" fill="#f2c4aa"/><rect x="3" y="16" width="6" height="1" fill="#3b5866"/><rect x="3" y="17" width="6" height="1" fill="#3b5866"/><rect x="3" y="18" width="2" height="1" fill="#e8e8e8"/><rect x="7" y="18" width="2" height="1" fill="#3c8c2c"/></svg>
<svg class="a" style="left:559.50px;top:142.50px" width="12.00" height="19.00" viewBox="0 0 12 19" shape-rendering="crispEdges"><rect x="1" y="0" width="1" height="1" fill="#a81010"/><rect x="1" y="1" width="2" height="1" fill="#a81010"/><rect x="4" y="1" width="6" height="1" fill="#e2180e"/><rect x="1" y="2" width="10" height="1" fill="#e2180e"/><rect x="0" y="3" width="12" height="1" fill="#e2180e"/><rect x="0" y="4" width="12" height="1" fill="#e2180e"/><rect x="0" y="5" width="12" height="1" fill="#e2180e"/><rect x="0" y="6" width="3" height="1" fill="#e2180e"/><rect x="3" y="6" width="6" height="1" fill="#f2c4aa"/><rect x="9" y="6" width="3" height="1" fill="#e2180e"/><rect x="0" y="7" width="2" height="1" fill="#e2180e"/><rect x="2" y="7" width="8" height="1" fill="#f2c4aa"/><rect x="10" y="7" width="2" height="1" fill="#e2180e"/><rect x="1" y="8" width="2" height="1" fill="#f2c4aa"/><rect x="3" y="8" width="2" height="1" fill="#ff2a2a"/><rect x="5" y="8" width="2" height="1" fill="#f2c4aa"/><rect x="7" y="8" width="2" height="1" fill="#ff2a2a"/><rect x="9" y="8" width="2" height="1" fill="#f2c4aa"/><rect x="2" y="9" width="8" height="1" fill="#f2c4aa"/><rect x="2" y="10" width="3" height="1" fill="#f2c4aa"/><rect x="5" y="10" width="2" height="1" fill="#5a4040"/><rect x="7" y="10" width="3" height="1" fill="#f2c4aa"/><rect x="3" y="11" width="6" height="1" fill="#f2c4aa"/><rect x="2" y="12" width="8" height="1" fill="#f3f3ee"/><rect x="1" y="13" width="10" height="1" fill="#f3f3ee"/><rect x="0" y="14" width="1" height="1" fill="#f2c4aa"/><rect x="1" y="14" width="10" height="1" fill="#f3f3ee"/><rect x="11" y="14" width="1" height="1" fill="#f2c4aa"/><rect x="1" y="15" width="1" height="1" fill="#f2c4aa"/><rect x="2" y="15" width="8" height="1" fill="#f3f3ee"/><rect x="10" y="15" width="1" height="1" fill="#f2c4aa"/><rect x="3" y="16" width="6" height="1" fill="#3b5866"/><rect x="3" y="17" width="6" height="1" fill="#3b5866"/><rect x="3" y="18" width="2" height="1" fill="#e8e8e8"/><rect x="7" y="18" width="2" height="1" fill="#3c8c2c"/></svg>
<svg class="a" style="left:511.50px;top:168.30px" width="12.00" height="18.00" viewBox="0 0 12 18" shape-rendering="crispEdges"><rect x="6" y="0" width="1" height="1" fill="#a81010"/><rect x="3" y="1" width="7" height="1" fill="#e2180e"/><rect x="1" y="2" width="10" height="1" fill="#e2180e"/><rect x="0" y="3" width="11" height="1" fill="#e2180e"/><rect x="0" y="4" width="11" height="1" fill="#e2180e"/><rect x="1" y="5" width="10" height="1" fill="#e2180e"/><rect x="1" y="6" width="4" height="1" fill="#f2c4aa"/><rect x="5" y="6" width="6" height="1" fill="#e2180e"/><rect x="1" y="7" width="1" height="1" fill="#f2c4aa"/><rect x="2" y="7" width="1" height="1" fill="#ff2a2a"/><rect x="3" y="7" width="3" height="1" fill="#f2c4aa"/><rect x="6" y="7" width="4" height="1" fill="#e2180e"/><rect x="1" y="8" width="6" height="1" fill="#f2c4aa"/><rect x="7" y="8" width="2" height="1" fill="#e2180e"/><rect x="2" y="9" width="6" height="1" fill="#f2c4aa"/><rect x="2" y="10" width="5" height="1" fill="#f2c4aa"/><rect x="3" y="11" width="5" height="1" fill="#f3f3ee"/><rect x="2" y="12" width="1" height="1" fill="#f2c4aa"/><rect x="3" y="12" width="6" height="1" fill="#f3f3ee"/><rect x="3" y="13" width="6" height="1" fill="#f3f3ee"/><rect x="3" y="14" width="5" height="1" fill="#f3f3ee"/><rect x="4" y="15" width="4" height="1" fill="#3b5866"/><rect x="4" y="16" width="4" height="1" fill="#3b5866"/><rect x="4" y="17" width="2" height="1" fill="#3c8c2c"/></svg>
<svg class="a" style="left:535.50px;top:168.30px" width="12.00" height="18.00" viewBox="0 0 12 18" shape-rendering="crispEdges"><rect x="6" y="0" width="1" height="1" fill="#a81010"/><rect x="3" y="1" width="7" height="1" fill="#e2180e"/><rect x="1" y="2" width="10" height="1" fill="#e2180e"/><rect x="0" y="3" width="11" height="1" fill="#e2180e"/><rect x="0" y="4" width="11" height="1" fill="#e2180e"/><rect x="1" y="5" width="10" height="1" fill="#e2180e"/><rect x="1" y="6" width="4" height="1" fill="#f2c4aa"/><rect x="5" y="6" width="6" height="1" fill="#e2180e"/><rect x="1" y="7" width="1" height="1" fill="#f2c4aa"/><rect x="2" y="7" width="1" height="1" fill="#ff2a2a"/><rect x="3" y="7" width="3" height="1" fill="#f2c4aa"/><rect x="6" y="7" width="4" height="1" fill="#e2180e"/><rect x="1" y="8" width="6" height="1" fill="#f2c4aa"/><rect x="7" y="8" width="2" height="1" fill="#e2180e"/><rect x="2" y="9" width="6" height="1" fill="#f2c4aa"/><rect x="2" y="10" width="5" height="1" fill="#f2c4aa"/><rect x="3" y="11" width="5" height="1" fill="#f3f3ee"/><rect x="2" y="12" width="1" height="1" fill="#f2c4aa"/><rect x="3" y="12" width="6" height="1" fill="#f3f3ee"/><rect x="3" y="13" width="6" height="1" fill="#f3f3ee"/><rect x="3" y="14" width="5" height="1" fill="#f3f3ee"/><rect x="4" y="15" width="4" height="1" fill="#3b5866"/><rect x="4" y="16" width="4" height="1" fill="#3b5866"/><rect x="4" y="17" width="2" height="1" fill="#3c8c2c"/></svg>
<svg class="a" style="left:559.50px;top:168.30px" width="12.00" height="18.00" viewBox="0 0 12 18" shape-rendering="crispEdges"><rect x="6" y="0" width="1" height="1" fill="#a81010"/><rect x="3" y="1" width="7" height="1" fill="#e2180e"/><rect x="1" y="2" width="10" height="1" fill="#e2180e"/><rect x="0" y="3" width="11" height="1" fill="#e2180e"/><rect x="0" y="4" width="11" height="1" fill="#e2180e"/><rect x="1" y="5" width="10" height="1" fill="#e2180e"/><rect x="1" y="6" width="4" height="1" fill="#f2c4aa"/><rect x="5" y="6" width="6" height="1" fill="#e2180e"/><rect x="1" y="7" width="1" height="1" fill="#f2c4aa"/><rect x="2" y="7" width="1" height="1" fill="#ff2a2a"/><rect x="3" y="7" width="3" height="1" fill="#f2c4aa"/><rect x="6" y="7" width="4" height="1" fill="#e2180e"/><rect x="1" y="8" width="6" height="1" fill="#f2c4aa"/><rect x="7" y="8" width="2" height="1" fill="#e2180e"/><rect x="2" y="9" width="6" height="1" fill="#f2c4aa"/><rect x="2" y="10" width="5" height="1" fill="#f2c4aa"/><rect x="3" y="11" width="5" height="1" fill="#f3f3ee"/><rect x="2" y="12" width="1" height="1" fill="#f2c4aa"/><rect x="3" y="12" width="6" height="1" fill="#f3f3ee"/><rect x="3" y="13" width="6" height="1" fill="#f3f3ee"/><rect x="3" y="14" width="5" height="1" fill="#f3f3ee"/><rect x="4" y="15" width="4" height="1" fill="#3b5866"/><rect x="4" y="16" width="4" height="1" fill="#3b5866"/><rect x="4" y="17" width="2" height="1" fill="#3c8c2c"/></svg>
<div class="a" style="left:506.3px;top:139.5px;width:53.6px;height:112.5px;border:1px solid #3c3c3c;box-shadow:inset 0 0 0 1.8px #f0f0f0"></div>
<div class="btn" style="left:750.1px;top:511px;width:65.6px;height:17.7px;border:1.5px solid #647891"></div>
<div class="t" style="left:750.10px;width:65.60px;text-align:center;top:514.69px;font-size:9.70px;">OK</div>
<div class="btn" style="left:824.4px;top:511.6px;width:64.1px;height:16.3px"></div>
<div class="t" style="left:824.40px;width:64.10px;text-align:center;top:514.29px;font-size:9.70px;">Cancel</div>
<svg class="a" style="left:213.00px;top:253.50px" width="6.00" height="17.00" viewBox="0 0 6 17" shape-rendering="crispEdges"><rect x="2" y="0" width="1" height="1" fill="#a81010"/><rect x="1" y="1" width="1" height="1" fill="#a81010"/><rect x="1" y="2" width="4" height="1" fill="#e2180e"/><rect x="0" y="3" width="6" height="1" fill="#e2180e"/><rect x="0" y="4" width="6" height="1" fill="#e2180e"/><rect x="0" y="5" width="6" height="1" fill="#e2180e"/><rect x="1" y="6" width="1" height="1" fill="#f2c4aa"/><rect x="2" y="6" width="1" height="1" fill="#ff2a2a"/><rect x="3" y="6" width="3" height="1" fill="#e2180e"/><rect x="1" y="7" width="3" height="1" fill="#f2c4aa"/><rect x="4" y="7" width="1" height="1" fill="#e2180e"/><rect x="1" y="8" width="4" height="1" fill="#f2c4aa"/><rect x="1" y="9" width="3" height="1" fill="#f2c4aa"/><rect x="2" y="10" width="3" height="1" fill="#f3f3ee"/><rect x="1" y="11" width="1" height="1" fill="#f2c4aa"/><rect x="2" y="11" width="4" height="1" fill="#f3f3ee"/><rect x="2" y="12" width="4" height="1" fill="#f3f3ee"/><rect x="2" y="13" width="3" height="1" fill="#f3f3ee"/><rect x="2" y="14" width="3" height="1" fill="#3b5866"/><rect x="2" y="15" width="2" height="1" fill="#3b5866"/><rect x="2" y="16" width="2" height="1" fill="#3c8c2c"/></svg>
<div class="a" style="left:214.6px;top:278.5px;width:1px;height:1px;background:#c01010"></div>
</body></html>
